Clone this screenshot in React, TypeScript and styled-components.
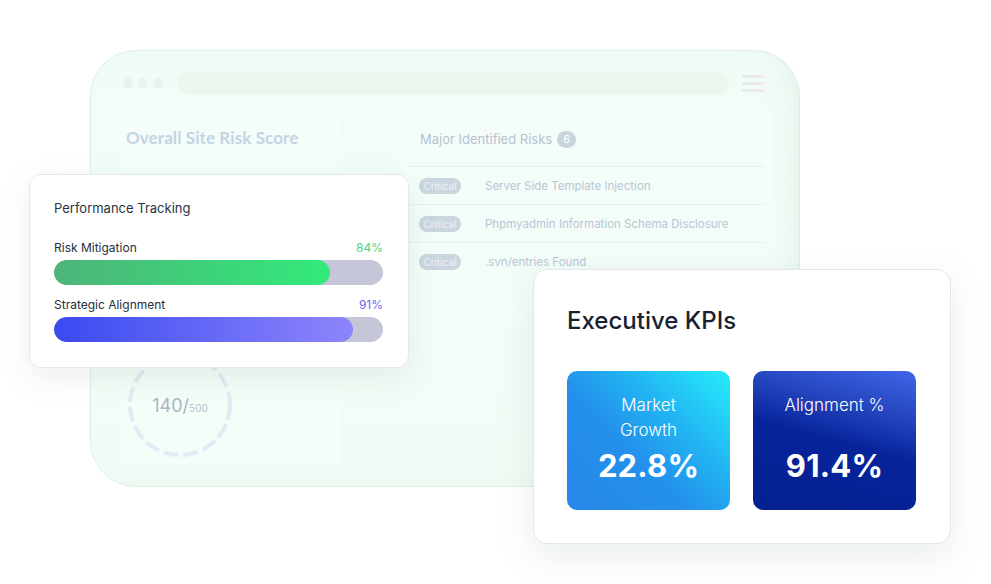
import React from 'react';
import styled, { createGlobalStyle } from 'styled-components';

const GlobalStyle = createGlobalStyle`
  html, body {
    margin: 0;
    padding: 0;
    background: #ffffff;
    font-family: Inter, "Liberation Sans", sans-serif;
  }
  * { box-sizing: border-box; }
`;

const risks = [
  'Server Side Template Injection',
  'Phpmyadmin Information Schema Disclosure',
  '.svn/entries Found',
];

const metrics = [
  { label: 'Risk Mitigation', value: 84, tone: 'green' as const },
  { label: 'Strategic Alignment', value: 91, tone: 'violet' as const },
];

const App = () => {
  return (
    <>
      <GlobalStyle />
      <Stage>
        <BrowserFrame>
          <TopBar>
            <Dots>
              <Dot />
              <Dot />
              <Dot />
            </Dots>
            <AddressBar />
            <Burger>
              <span />
              <span />
              <span />
            </Burger>
          </TopBar>

          <FrameBody>
            <ScorePanel>
              <ScoreTitle>Overall Site Risk Score</ScoreTitle>
              <Gauge>
                <svg width="106" height="106" viewBox="0 0 106 106">
                  <circle
                    cx="53"
                    cy="53"
                    r="50"
                    fill="none"
                    stroke="#e0ebf5"
                    strokeWidth="4"
                    strokeDasharray="15 5"
                  />
                </svg>
                <GaugeValue>
                  140/<small>500</small>
                </GaugeValue>
              </Gauge>
            </ScorePanel>

            <RiskPanel>
              <RiskHeader>
                Major Identified Risks <Count>6</Count>
              </RiskHeader>
              {risks.map((r) => (
                <RiskRow key={r}>
                  <Pill>Critical</Pill>
                  <RiskName>{r}</RiskName>
                </RiskRow>
              ))}
            </RiskPanel>
          </FrameBody>
        </BrowserFrame>

        <TrackingCard>
          <CardTitle>Performance Tracking</CardTitle>
          {metrics.map((m) => (
            <Metric key={m.label}>
              <MetricHead>
                <span>{m.label}</span>
                <Percent $tone={m.tone}>{m.value}%</Percent>
              </MetricHead>
              <Track>
                <Fill $tone={m.tone} style={{ width: `${m.value}%` }} />
              </Track>
            </Metric>
          ))}
        </TrackingCard>

        <KpiCard>
          <KpiTitle>Executive KPIs</KpiTitle>
          <KpiGrid>
            <KpiTile $variant="sky">
              <KpiLabel>
                Market
                <br />
                Growth
              </KpiLabel>
              <KpiValue>22.8%</KpiValue>
            </KpiTile>
            <KpiTile $variant="navy">
              <KpiLabel>Alignment %</KpiLabel>
              <KpiValue>91.4%</KpiValue>
            </KpiTile>
          </KpiGrid>
        </KpiCard>
      </Stage>
    </>
  );
};

const Stage = styled.div`
  position: relative;
  width: 991px;
  height: 584px;
  padding: 50px 0 0 90px;
  overflow: hidden;
`;

const BrowserFrame = styled.div`
  width: 710px;
  height: 437px;
  border-radius: 46px;
  border: 1px solid #dcefe4;
  background: linear-gradient(180deg, #f1fcf6 0%, #f4fdf8 60%, #f1fbf5 100%);
  box-shadow: inset -20px 0 30px -20px rgba(170, 200, 185, 0.25);
  padding: 21px 35px 0 32px;
  display: flex;
  flex-direction: column;
`;

const TopBar = styled.div`
  display: flex;
  align-items: center;
  height: 22px;
`;

const Dots = styled.div`
  display: flex;
  gap: 5px;
`;

const Dot = styled.span`
  width: 10px;
  height: 10px;
  border-radius: 50%;
  background: #e9f2ec;
`;

const AddressBar = styled.div`
  margin-left: 15px;
  width: 550px;
  height: 22px;
  border-radius: 11px;
  background: #ebf6ef;
`;

const Burger = styled.div`
  margin-left: 14px;
  width: 22px;
  display: flex;
  flex-direction: column;
  gap: 4px;

  span {
    display: block;
    height: 3px;
    background: #ebe9ea;
    border-radius: 1px;
  }
`;

const FrameBody = styled.div`
  display: grid;
  grid-template-columns: 220px 373px;
  column-gap: 60px;
  margin: 19px 0 0 -3px;
  flex: 1;
`;

const ScorePanel = styled.div`
  background: linear-gradient(180deg, #f4fdf9 0%, #f4fdf8 100%);
  padding: 14px 6px 0 6px;
  height: 352px;
`;

const ScoreTitle = styled.div`
  font-family: Lato, "Open Sans", sans-serif;
  font-weight: 700;
  font-size: 17px;
  color: #c3d4e3;
  letter-spacing: 0.1px;
`;

const Gauge = styled.div`
  position: relative;
  width: 106px;
  height: 106px;
  margin: 204px 0 0 1px;

  svg {
    display: block;
  }
`;

const GaugeValue = styled.div`
  position: absolute;
  inset: 0;
  display: flex;
  align-items: center;
  justify-content: center;
  font-family: Inter, sans-serif;
  font-size: 18px;
  color: #a9b5c1;

  small {
    font-size: 10px;
    margin-top: 5px;
    color: #b6c2cd;
  }
`;

const RiskPanel = styled.div`
  background: linear-gradient(180deg, #f5fdf9 0%, #f3fcf8 100%);
  padding: 16px 8px 0 5px;
  height: 165px;
`;

const RiskHeader = styled.div`
  display: flex;
  align-items: center;
  gap: 5px;
  padding-left: 15px;
  height: 20px;
  font-size: 13px;
  color: #b4c3d4;
  border-bottom: 1px solid #e2eff3;
  box-sizing: content-box;
  padding-bottom: 17px;
`;

const Count = styled.span`
  display: inline-flex;
  align-items: center;
  justify-content: center;
  width: 19px;
  height: 17px;
  border-radius: 9px;
  background: #c8d4de;
  color: #ffffff;
  font-size: 11px;
`;

const RiskRow = styled.div`
  display: flex;
  align-items: center;
  height: 38px;
  padding-left: 14px;
  border-bottom: 1px solid #e4f1f3;

  &:last-child {
    border-bottom: none;
  }
`;

const Pill = styled.span`
  width: 42px;
  height: 16px;
  border-radius: 8px;
  background: #cad6de;
  color: #edf2f5;
  font-size: 10px;
  display: inline-flex;
  align-items: center;
  justify-content: center;
`;

const RiskName = styled.span`
  margin-left: 24px;
  font-size: 11.5px;
  color: #b8c6d6;
`;

const TrackingCard = styled.div`
  position: absolute;
  left: 29px;
  top: 174px;
  width: 380px;
  height: 194px;
  padding: 25px 25px 0 24px;
  background: #ffffff;
  border: 1px solid #e4e8ee;
  border-radius: 12px;
  box-shadow: 0 10px 30px rgba(120, 150, 140, 0.14);
`;

const CardTitle = styled.div`
  font-size: 13px;
  color: #2b3443;
  margin-bottom: 24px;
`;

const Metric = styled.div`
  & + & {
    margin-top: 12px;
  }
`;

const MetricHead = styled.div`
  display: flex;
  justify-content: space-between;
  align-items: center;
  font-size: 12px;
  color: #252e3c;
  margin-bottom: 5px;
`;

const Percent = styled.span<{ $tone: 'green' | 'violet' }>`
  color: ${(p) => (p.$tone === 'green' ? '#4ad685' : '#6b66f2')};
`;

const Track = styled.div`
  height: 25px;
  border-radius: 13px;
  background: #c5c6d8;
  overflow: hidden;
`;

const Fill = styled.div<{ $tone: 'green' | 'violet' }>`
  height: 100%;
  border-radius: 13px;
  background: ${(p) =>
    p.$tone === 'green'
      ? 'linear-gradient(90deg, #4db479 0%, #3fcf7a 50%, #33ea7a 100%)'
      : 'linear-gradient(90deg, #3a4af0 0%, #6467f6 50%, #8d85fb 100%)'};
`;

const KpiCard = styled.div`
  position: absolute;
  left: 533px;
  top: 269px;
  width: 418px;
  height: 275px;
  padding: 36px 34px 0 33px;
  background: #ffffff;
  border: 1px solid #e3e7eb;
  border-radius: 14px;
  box-shadow: 0 12px 36px rgba(120, 150, 140, 0.16);
`;

const KpiTitle = styled.div`
  font-size: 24px;
  font-weight: 500;
  color: #182231;
  line-height: 30px;
`;

const KpiGrid = styled.div`
  display: grid;
  grid-template-columns: 163px 163px;
  column-gap: 23px;
  margin-top: 35px;
`;

const KpiTile = styled.div<{ $variant: 'sky' | 'navy' }>`
  height: 139px;
  border-radius: 10px;
  color: #ffffff;
  display: flex;
  flex-direction: column;
  align-items: center;
  justify-content: space-between;
  padding: 22px 0 27px;
  text-align: center;
  background: ${(p) =>
    p.$variant === 'sky'
      ? 'linear-gradient(225deg, #25edfa 0%, #22b4f2 35%, #2490ec 60%, #2787e8 100%)'
      : 'linear-gradient(195deg, #4066e8 0%, #2344bd 28%, #07249c 50%, #04208f 100%)'};
`;

const KpiLabel = styled.div`
  font-size: 17px;
  font-weight: 300;
  line-height: 25px;
`;

const KpiValue = styled.div`
  font-size: 31px;
  font-weight: 700;
  line-height: 34px;
  letter-spacing: 0.2px;
`;

export default App;
